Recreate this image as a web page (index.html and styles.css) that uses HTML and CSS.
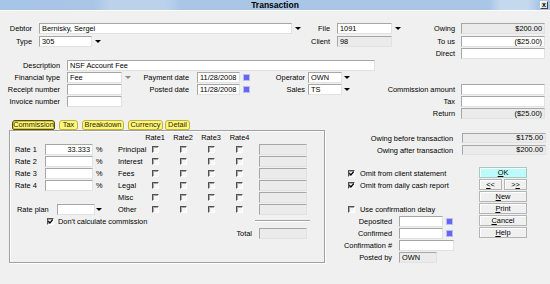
FILE: index.html
```html
<!DOCTYPE html>
<html lang="en">
<head>
  <meta charset="UTF-8" />
  <title>Transaction</title>
  <link rel="stylesheet" href="styles.css">
</head>
<body>
<div class="window">
  <div class="titlebar">
    <span></span>
    <span class="title">Transaction</span>
    <span class="close">x</span>
  </div>

  <div class="form">
    <div class="row r1">
      <div class="fld g1"><span class="lb w39">Debtor</span>
        <div class="combo w264"><span class="in">Bernisky, Sergei</span><span class="arr"></span></div></div>
      <div class="fld g2"><span class="lb w34">File</span>
        <div class="combo w66"><span class="in">1091</span><span class="arr"></span></div></div>
      <div class="fld"><span class="lb w58">Owing</span><span class="in ro num w84">$200.00</span></div>
    </div>
    <div class="row r1">
      <div class="fld g1"><span class="lb w39">Type</span>
        <div class="combo w64"><span class="in">305</span><span class="arr"></span></div></div>
      <div class="fld g2"><span class="lb w34">Client</span><span class="in ro w55">98</span></div>
      <div class="fld"><span class="lb w58">To us</span><span class="in num w84">($25.00)</span></div>
    </div>
    <div class="row r3">
      <div class="g1"></div>
      <div class="g2"></div>
      <div class="fld"><span class="lb w58">Direct</span><span class="in w84"></span></div>
    </div>
    <div class="row">
      <div class="fld"><span class="lb w67">Description</span><span class="in w308">NSF Account Fee</span></div>
    </div>
    <div class="row">
      <div class="fld ga"><span class="lb w67">Financial type</span>
        <div class="combo w66"><span class="in">Fee</span><span class="arr dim"></span></div></div>
      <div class="fld gb"><span class="lb w64 pr8">Payment date</span><span class="in w43">11/28/2008</span><span class="cal"></span></div>
      <div class="fld gc"><span class="lb w57 pr3">Operator</span>
        <div class="combo w44"><span class="in">OWN</span><span class="arr narrow"></span></div></div>
    </div>
    <div class="row">
      <div class="fld ga"><span class="lb w67">Receipt number</span><span class="in w55"></span></div>
      <div class="fld gb"><span class="lb w64 pr8">Posted date</span><span class="in w43">11/28/2008</span><span class="cal"></span></div>
      <div class="fld gc"><span class="lb w57 pr3">Sales</span>
        <div class="combo w44"><span class="in">TS</span><span class="arr narrow"></span></div></div>
      <div class="fld"><span class="lb w109">Commission amount</span><span class="in w84"></span></div>
    </div>
    <div class="row">
      <div class="fld ga"><span class="lb w67">Invoice number</span><span class="in w55"></span></div>
      <div class="gb"></div>
      <div class="gc"></div>
      <div class="fld"><span class="lb w109">Tax</span><span class="in w84"></span></div>
    </div>
    <div class="row">
      <div class="ga"></div>
      <div class="gb"></div>
      <div class="gc"></div>
      <div class="fld"><span class="lb w109">Return</span><span class="in ro num w84">($25.00)</span></div>
    </div>
  </div>

  <div class="lower">
    <div class="tabbox">
      <div class="tabs">
        <span class="tab on t1">Commission</span>
        <span class="tab t2">Tax</span>
        <span class="tab t3">Breakdown</span>
        <span class="tab t4">Currency</span>
        <span class="tab t5">Detail</span>
      </div>
      <div class="panel">
        <div class="grid">
          <span class="hd c5">Rate1</span>
          <span class="hd">Rate2</span>
          <span class="hd">Rate3</span>
          <span class="hd">Rate4</span>

          <span class="c1">Rate 1</span><span class="in num">33.333</span><span class="pct">%</span><span>Principal</span>
          <span class="cb"></span><span class="cb"></span><span class="cb"></span><span class="cb"></span><span class="in ro amt"></span>

          <span class="c1">Rate 2</span><span class="in"></span><span class="pct">%</span><span>Interest</span>
          <span class="cb"></span><span class="cb"></span><span class="cb"></span><span class="cb"></span><span class="in ro amt"></span>

          <span class="c1">Rate 3</span><span class="in"></span><span class="pct">%</span><span>Fees</span>
          <span class="cb"></span><span class="cb"></span><span class="cb"></span><span class="cb"></span><span class="in ro amt"></span>

          <span class="c1">Rate 4</span><span class="in"></span><span class="pct">%</span><span>Legal</span>
          <span class="cb"></span><span class="cb"></span><span class="cb"></span><span class="cb"></span><span class="in ro amt"></span>

          <span class="c4">Misc</span>
          <span class="cb"></span><span class="cb"></span><span class="cb"></span><span class="cb"></span><span class="in ro amt"></span>

          <div class="rateplan"><span class="rp-lb">Rate plan</span>
            <div class="combo w46"><span class="in"></span><span class="arr tiny"></span></div></div>
          <span>Other</span>
          <span class="cb"></span><span class="cb"></span><span class="cb"></span><span class="cb"></span><span class="in ro amt"></span>

          <div class="nocalc"><span class="cb"><svg viewBox="0 0 5 5" width="5" height="5"><path d="M0.4 2.2 L1.9 3.9 L4.7 0.6" fill="none" stroke="#000" stroke-width="1.3"/></svg></span>Don't calculate commission</div>
          <span class="sep"></span>

          <span class="total">Total</span><span class="in ro amt"></span>
        </div>
      </div>
    </div>

    <div class="side">
      <div class="srow"><span class="lb w122">Owing before transaction</span><span class="in ro num w84 h10">$175.00</span></div>
      <div class="srow"><span class="lb w122">Owing after transaction</span><span class="in ro num w84 h10">$200.00</span></div>
      <div class="sbot">
        <div class="checks">
          <div class="crow"><span class="cb"><svg viewBox="0 0 5 5" width="5" height="5"><path d="M0.4 2.2 L1.9 3.9 L4.7 0.6" fill="none" stroke="#000" stroke-width="1.3"/></svg></span>Omit from client statement</div>
          <div class="crow"><span class="cb"><svg viewBox="0 0 5 5" width="5" height="5"><path d="M0.4 2.2 L1.9 3.9 L4.7 0.6" fill="none" stroke="#000" stroke-width="1.3"/></svg></span>Omit from daily cash report</div>
          <div class="crow"></div>
          <div class="crow"><span class="cb"></span>Use confirmation delay</div>
          <div class="frow"><span class="lb w59">Deposited</span><span class="in w44"></span><span class="cal"></span></div>
          <div class="frow"><span class="lb w59">Confirmed</span><span class="in w44"></span><span class="cal"></span></div>
          <div class="frow"><span class="lb w59">Confirmation #</span><span class="in w55"></span></div>
          <div class="frow"><span class="lb w59">Posted by</span><span class="in ro w38">OWN</span></div>
        </div>
        <div class="btns">
          <button class="btn ok"><u>O</u>K</button>
          <div class="pair"><button class="btn"><u>&lt;</u>&lt;</button><button class="btn">&gt;<u>&gt;</u></button></div>
          <button class="btn"><u>N</u>ew</button>
          <button class="btn"><u>P</u>rint</button>
          <button class="btn"><u>C</u>ancel</button>
          <button class="btn"><u>H</u>elp</button>
        </div>
      </div>
    </div>
  </div>
</div>
</body>
</html>
```

FILE: styles.css
```css
body {
  margin: 0;
  font-family: "Liberation Sans", Arial, sans-serif;
  font-size: 7.4px;
  color: #000;
  background: #f0f0f0;
}

.window {
  width: 550px;
  height: 284px;
  overflow: hidden;
  background: #f0f0f0;
}

/* title bar */
.titlebar {
  height: 10px;
  display: grid;
  grid-template-columns: 1fr auto 1fr;
  align-items: center;
  background: linear-gradient(to right, #a7c5e6 0%, #a9c6e7 17%, #bcd2eb 20%, #bcd2eb 30%, #a9c6e7 33%, #a9c6e7 89%, #c4d8ee 91%, #c4d8ee 96%, #a9c6e7 98%);
  border-bottom: 1px solid #fbfbfb;
}

.title {
  font-weight: bold;
  font-size: 8.5px;
  line-height: 10px;
}

.close {
  justify-self: end;
  margin-right: 2px;
  box-sizing: border-box;
  width: 8px;
  height: 8px;
  border: 1px solid;
  border-color: #fff #404040 #404040 #fff;
  background: #e4e4e4;
  font-weight: bold;
  font-size: 7px;
  line-height: 5px;
  text-align: center;
}

/* upper form */
.form {
  padding-top: 11px;
}

.row {
  display: flex;
  align-items: center;
  height: 12px;
}

.row.r1 { height: 13px; }
.row.r3 { height: 11px; }

.fld {
  display: flex;
  align-items: center;
}

.g1 { width: 303px; }
.g2 { width: 100px; }
.ga { width: 133px; }
.gb { width: 118px; }
.gc { width: 101px; }

.lb {
  flex: none;
  box-sizing: border-box;
  text-align: right;
  padding-right: 7px;
  white-space: nowrap;
}

.lb.pr8 { padding-right: 8px; }
.lb.pr3 { padding-right: 3px; }

.w34 { width: 34px; }
.w38 { width: 38px; }
.w39 { width: 39px; }
.w43 { width: 43px; }
.w44 { width: 44px; }
.w46 { width: 46px; }
.w55 { width: 55px; }
.w57 { width: 57px; }
.w58 { width: 58px; padding-right: 6px; }
.w59 { width: 59px; }
.w64 { width: 64px; }
.w66 { width: 66px; }
.w67 { width: 67px; }
.w84 { width: 84px; }
.w109 { width: 109px; padding-right: 6px; }
.w122 { width: 122px; padding-right: 9px; }
.w264 { width: 264px; }
.w308 { width: 308px; }

.in {
  flex: none;
  display: block;
  box-sizing: border-box;
  height: 11px;
  line-height: 9px;
  padding: 0 1px 0 2px;
  background: #fff;
  border: 1px solid;
  border-color: #a6a6a6 #e2e2e2 #e2e2e2 #a6a6a6;
  white-space: nowrap;
  overflow: hidden;
}

.in.h10 {
  height: 10px;
  line-height: 8px;
}

.ro { background: #ebebeb; }

.num {
  text-align: right;
  padding-right: 2px;
}

.combo {
  flex: none;
  display: flex;
  height: 11px;
}

.combo .in { flex: 1; }

.arr {
  flex: none;
  width: 11px;
  display: flex;
  align-items: center;
  justify-content: center;
}

.arr::after {
  content: "";
  border-left: 3px solid transparent;
  border-right: 3px solid transparent;
  border-top: 3px solid #000;
}

.arr.dim::after { border-top-color: #8a8a8a; }
.arr.narrow { width: 10px; }
.arr.tiny { width: 8px; }

.cal {
  flex: none;
  box-sizing: border-box;
  width: 7px;
  height: 7px;
  margin-left: 3px;
  background: #6666f4;
  border: 1px solid #bcbcf0;
}

/* lower part */
.lower {
  display: flex;
  align-items: flex-start;
  margin-top: 1px;
}

.tabbox {
  width: 316px;
  margin-left: 9px;
}

.tabs {
  display: flex;
  gap: 4px;
  height: 10px;
  padding-left: 3px;
}

.tab {
  box-sizing: border-box;
  height: 10px;
  line-height: 8px;
  text-align: center;
  background: #fff67c;
  border: 1px solid #c4b23c;
  border-radius: 3px 3px 2px 2px;
  color: #2a2600;
}

.tab.on {
  border-color: #5a5000;
  box-shadow: inset 0 0 0 1px #d8c640;
}

.t1 { width: 43px; }
.t2 { width: 19px; }
.t3 { width: 42px; }
.t4 { width: 35px; }
.t5 { width: 25px; margin-left: -2px; }

.panel {
  box-sizing: border-box;
  height: 133px;
  padding-left: 5px;
  border: 1px solid #a0a0a0;
  box-shadow: inset 1px 1px 0 #fff, 1px 1px 0 #fff;
}

.grid {
  display: grid;
  grid-template-columns: 30px 48px 25px 23px 28px 28px 28px 29px 53px;
  grid-template-rows: repeat(9, 12px);
  align-items: center;
  white-space: nowrap;
}

.hd { justify-self: center; }
.c1 { grid-column-start: 1; }
.c4 { grid-column-start: 4; }
.c5 { grid-column-start: 5; }

.pct { padding-left: 3px; }

.amt {
  margin-left: 5px;
  width: 48px;
}

.grid .cb { justify-self: center; }

.cb {
  flex: none;
  display: block;
  box-sizing: border-box;
  width: 7px;
  height: 7px;
  border-top: 1px solid #505050;
  border-left: 1px solid #505050;
  border-right: 1px solid #fff;
  border-bottom: 1px solid #fff;
  box-shadow: inset 1px 1px 0 #a8a8a8;
  background: #f6f6f6;
}

.cb svg { display: block; }

.rateplan {
  grid-column: 1 / 4;
  display: flex;
  align-items: center;
  padding-left: 2px;
}

.rp-lb {
  width: 40px;
}

.nocalc {
  grid-column: 1 / 9;
  display: flex;
  align-items: center;
  gap: 4px;
  padding-left: 32px;
}

.sep {
  margin-left: 1px;
  width: 55px;
  border-top: 1px solid #a0a0a0;
  border-bottom: 1px solid #fff;
}

.total {
  grid-column-start: 8;
  text-align: right;
  padding-right: 2px;
}

/* right side */
.side {
  width: 206px;
  margin-left: 15px;
  margin-top: 12px;
}

.srow {
  display: flex;
  align-items: center;
  height: 12px;
}

.sbot {
  display: flex;
  margin-top: 11px;
}

.checks {
  width: 139px;
}

.crow {
  display: flex;
  align-items: center;
  gap: 5px;
  height: 12px;
  padding-left: 8px;
  white-space: nowrap;
}

.frow {
  display: flex;
  align-items: center;
  height: 12px;
}

.btns {
  width: 48px;
  display: flex;
  flex-direction: column;
  gap: 1px;
}

.pair {
  display: flex;
  gap: 2px;
}

.pair .btn { width: 23px; }

.btn {
  box-sizing: border-box;
  height: 11px;
  padding: 0;
  font: inherit;
  line-height: 9px;
  color: #000;
  background: #f0f0f0;
  border: 1px solid #b4b4b4;
  box-shadow: inset 1px 1px 0 #fff;
}

.btn.ok {
  background: #bdfcfc;
  border-color: #a8c8c8;
}
```
